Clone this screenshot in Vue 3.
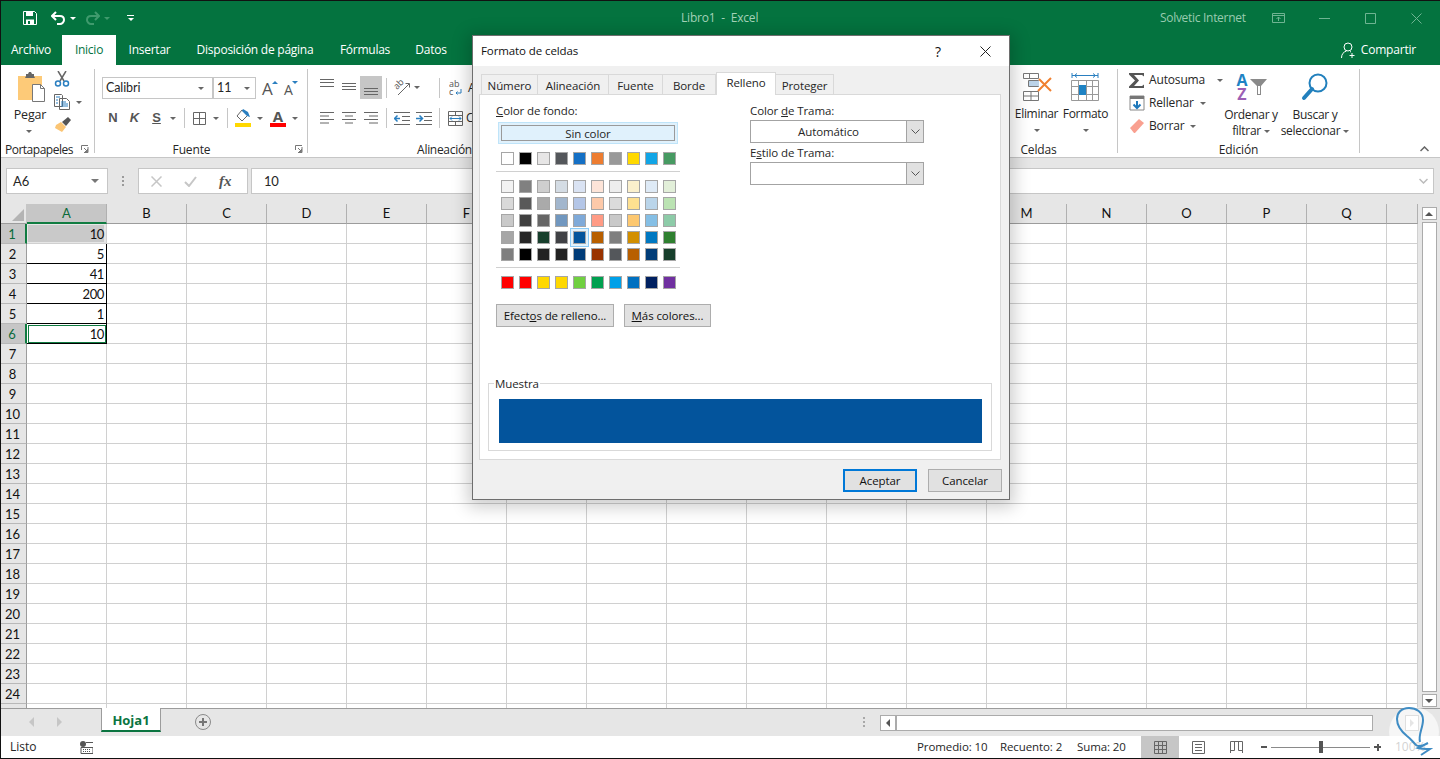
<script setup>
const tabs = [
  { t: 'Archivo', w: 60 },
  { t: 'Inicio', w: 54, on: true },
  { t: 'Insertar', w: 67 },
  { t: 'Disposición de página', w: 144 },
  { t: 'Fórmulas', w: 76 },
  { t: 'Datos', w: 56 }
]
const cols = ['A','B','C','D','E','F','G','H','I','J','K','L','M','N','O','P','Q','']
const rows = Array.from({ length: 25 }, (_, i) => i + 1)
const vals = { 1: '10', 2: '5', 3: '41', 4: '200', 5: '1', 6: '10' }
const dlgTabs = ['Número', 'Alineación', 'Fuente', 'Borde', 'Relleno', 'Proteger']
const theme = ['#ffffff','#000000','#e7e6e6','#54575b','#1570c5','#ed7d31','#999999','#ffd900','#11a5e6','#479a62']
const shades = [
  '#f2f2f2','#808080','#cfcfcf','#d4dce4','#dae3f3','#fde4d8','#ededed','#fbf0cc','#deeaf6','#e2efd9',
  '#d9d9d9','#595959','#aaaaaa','#a2b6cd','#b4c6e7','#fdc9a9','#dbdbdb','#fee090','#bad5ea','#bbe3b3',
  '#c9c9c9','#404040','#666666','#7197bf','#7faad9','#ff9b85','#c9c9c9','#fdc870','#85bfe5','#8dcba8',
  '#a6a6a6','#262626','#173f2c','#404145','#03549c','#b85f00','#7f7f7f','#d28f00','#0078c1','#2f8030',
  '#7f7f7f','#000000','#222222','#222222','#003c78','#993300','#54575b','#b85f00','#003c78','#173f2c'
]
const standard = ['#ff0000','#ff0000','#ffd800','#ffd800','#70d040','#00a050','#00a0e8','#0070c0','#002060','#7030a0']
</script>

<template>
  <div class="win">
    <header class="title">
      <div class="qat">
        <svg class="i-save" width="14" height="14" viewBox="0 0 14 14"><path d="M.5.5h11l2 2v11H.5z" fill="none" stroke="#fff"/><path d="M3 1h7v4H3zM3 8.500h8V13H3z" fill="#fff"/><path d="M5 10h2v3H5z" fill="#04733f"/></svg>
        <svg class="i-undo" width="15" height="14" viewBox="0 0 15 14"><path d="M1 5h8c3 0 4 2 4 4s-2 4-4 4H6M5 1 1 5l4 4" fill="none" stroke="#fff" stroke-width="2"/></svg>
        <i class="car white"></i>
        <svg class="i-redo" width="15" height="14" viewBox="0 0 15 14"><path d="M14 5H6C3 5 2 7 2 9s2 4 4 4h3M10 1l4 4-4 4" fill="none" stroke="#3f9a6d" stroke-width="2"/></svg>
        <i class="car dim"></i>
        <span class="cust"><b></b><i class="car white"></i></span>
      </div>
      <div class="doc">Libro1 &nbsp;-&nbsp; Excel</div>
      <div class="acct">Solvetic Internet</div>
      <div class="wbs">
        <span class="wb"><svg width="13" height="11" viewBox="0 0 13 11"><path d="M.5.500h12v9H.500zM.5 2.500h12M6.500 8V4M4.500 6l2-2 2 2" fill="none" stroke="#6fb492"/></svg></span>
        <span class="wb"><svg width="11" height="11" viewBox="0 0 11 11"><path d="M0 5.500h11" stroke="#6fb492"/></svg></span>
        <span class="wb"><svg width="11" height="11" viewBox="0 0 11 11"><path d="M.5.500h10v10H.500z" fill="none" stroke="#6fb492"/></svg></span>
        <span class="wb"><svg width="11" height="11" viewBox="0 0 11 11"><path d="m.5.500 10 10m0-10-10 10" fill="none" stroke="#6fb492"/></svg></span>
      </div>
    </header>

    <nav class="tabs">
      <span v-for="t in tabs" :key="t.t" class="tab" :class="{ on: t.on }" :style="{ width: t.w + 'px' }">{{ t.t }}</span>
      <span class="share">
        <svg width="16" height="17" viewBox="0 0 16 17"><circle cx="7" cy="5" r="4" fill="none" stroke="#fff"/><path d="M.5 16c0-4 2-6 5-7M9 9.500l1 .5M11 11v5M8.500 13.500h5" fill="none" stroke="#fff"/></svg>
        Compartir
      </span>
    </nav>

    <section class="ribbon">
      <div class="grp g-clip">
        <div class="clip-body">
          <div class="paste">
            <svg width="30" height="31" viewBox="0 0 30 31"><path d="M1 5h24v24H1z" fill="#fdca78"/><path d="M9 5V3h2l1-2h2l1 2h2v2l1 2H8z" fill="#666"/><path d="M15.500 13.500h8l4 4v13h-12z" fill="#fff" stroke="#777"/><path d="M23.500 13.500v4h4" fill="none" stroke="#777"/></svg>
            <span class="lbl">Pegar</span>
            <i class="car"></i>
          </div>
          <div class="clip-tools">
            <svg width="16" height="16" viewBox="0 0 16 16"><path d="M4 0l6 10M12 0 6 10" stroke="#666" stroke-width="1.500"/><circle cx="4" cy="12.500" r="2.500" fill="none" stroke="#2a7fc0" stroke-width="1.500"/><circle cx="12" cy="12.500" r="2.500" fill="none" stroke="#2a7fc0" stroke-width="1.500"/></svg>
            <span class="copy"><svg width="16" height="16" viewBox="0 0 16 16"><path d="M.5.500h7l1 1v11H.500zM5.500 4.500h7l3 3v8h-10z" fill="#fff" stroke="#666"/><path d="M2 3h4M2 6h2M2 9h2M7 8h5M7 10h7M7 12h7" stroke="#2a7fc0"/></svg><i class="car"></i></span>
            <svg width="17" height="16" viewBox="0 0 17 16"><path d="M7 5l5 5-4 5-7-4 1-3z" fill="#fbc574"/><path d="M8 5l6-5 3 3-5 6z" fill="#555"/></svg>
          </div>
        </div>
        <div class="gl">Portapapeles</div>
        <svg class="launch" width="8" height="8" viewBox="0 0 8 8"><path d="M.5 5V.500H7M7 2v5.500H3M3 3l3.500 3.500M6.500 4v2.500H4" fill="none" stroke="#777"/></svg>
      </div>

      <div class="grp g-font">
        <div class="f-r1">
          <div class="combo c-font"><span>Calibri</span><i class="car"></i></div>
          <div class="combo c-size"><span>11</span><i class="car"></i></div>
          <span class="growa">A<i class="up"></i></span>
          <span class="growa small">A<i class="dn"></i></span>
        </div>
        <div class="f-r2">
          <b class="fm">N</b><b class="fm it">K</b><b class="fm un">S</b><i class="car"></i>
          <u class="vs"></u>
          <svg width="13" height="13" viewBox="0 0 13 13"><path d="M.5.500h12v12H.500zM6.500.500v12M.5 6.500h12" fill="none" stroke="#666"/></svg>
          <i class="car"></i>
          <u class="vs"></u>
          <svg width="16" height="18" viewBox="0 0 16 18"><path d="M7 1 2 7l5 5 6-6z" fill="#fff" stroke="#666"/><path d="M8 0l5 3 2 5-3-1-5-5z" fill="#2a7fc0"/><path d="M0 14h16v4H0z" fill="#ffd800"/></svg>
          <i class="car"></i>
          <span class="fcolor">A</span>
          <i class="car"></i>
        </div>
        <div class="gl gl-f">Fuente</div>
        <svg class="launch" width="8" height="8" viewBox="0 0 8 8"><path d="M.5 5V.500H7M7 2v5.500H3M3 3l3.500 3.500M6.500 4v2.500H4" fill="none" stroke="#777"/></svg>
      </div>

      <div class="grp g-align">
        <div class="a-r1">
          <svg width="14" height="23" viewBox="0 0 14 23"><path d="M0 3.500h14M0 6.500h14M0 10.500h14" stroke="#666"/></svg>
          <svg width="14" height="23" viewBox="0 0 14 23"><path d="M0 7.500h14M0 10.500h14M0 13.500h14" stroke="#666"/></svg>
          <span class="hl"><svg width="14" height="23" viewBox="0 0 14 23"><path d="M0 12.500h14M0 15.500h14M0 18.500h14" stroke="#666"/></svg></span>
          <u class="vs"></u>
          <svg width="18" height="18" viewBox="0 0 18 18"><text x="0" y="0" transform="translate(4 11) rotate(-45)" font-size="9" fill="#555" font-family="Open Sans">ab</text><path d="M5 16 16 5M12.500 4.500H16.500V8.500" fill="none" stroke="#666"/></svg>
          <i class="car"></i>
          <span></span>
          <u class="vs"></u>
          <svg width="13" height="17" viewBox="0 0 13 17"><text x="0" y="8" font-size="9" fill="#555" font-family="Open Sans">ab</text><text x="0" y="16" font-size="9" fill="#555" font-family="Open Sans">c</text><path d="M12 10v4H7M8.500 12.500 7 14l1.500 1.500" fill="none" stroke="#2a7fc0"/></svg>
          <span class="rt">A</span>
        </div>
        <div class="a-r2">
          <svg width="14" height="12" viewBox="0 0 14 12"><path d="M0 .5h14M0 4h9M0 7.500h14M0 11h9" stroke="#666"/></svg>
          <svg width="14" height="12" viewBox="0 0 14 12"><path d="M0 .5h14M3 4h8M0 7.500h14M3 11h8" stroke="#666"/></svg>
          <svg width="14" height="12" viewBox="0 0 14 12"><path d="M0 .5h14M5 4h9M0 7.500h14M5 11h9" stroke="#666"/></svg>
          <u class="vs"></u>
          <svg width="16" height="13" viewBox="0 0 16 13"><path d="M0 .5h16M8 4.500h8M8 8.500h8M0 12.500h16" stroke="#666"/><path d="M6 6.500H1M3.500 3.500l-3 3 3 3" fill="none" stroke="#2a7fc0" stroke-width="1.500"/></svg>
          <svg width="16" height="13" viewBox="0 0 16 13"><path d="M0 .5h16M8 4.500h8M8 8.500h8M0 12.500h16" stroke="#666"/><path d="M0 6.500h6M3.500 3.500l3 3-3 3" fill="none" stroke="#2a7fc0" stroke-width="1.500"/></svg>
          <u class="vs"></u>
          <svg width="15" height="15" viewBox="0 0 15 15"><path d="M.5.500h14v14H.500zM.5 4.500h14M.5 10.500h14M7.500.500v4M7.500 10.500v4" fill="none" stroke="#666"/><path d="M2 7.500h11M4 5.500l-2 2 2 2M11 5.500l2 2-2 2" fill="none" stroke="#2a7fc0"/></svg>
          <span class="rt">C</span>
        </div>
        <div class="gl gl-a">Alineación</div>
      </div>

      <div class="gap"></div>

      <div class="grp g-cells">
        <div class="cells-body">
          <div class="big">
            <svg width="32" height="30" viewBox="0 0 32 30"><path d="M2.500 1.500h15v5h-15zM8.500 1.500v5M7.500 8.500h10v6h-10z" fill="#fff" stroke="#777"/><path d="M8 9h10v5H8z" fill="#bcd3e8"/><path d="M2.500 19.500h15v9h-15zM10 19.500v9M2.500 24h15" fill="none" stroke="#777"/><path d="m18 7 12 12M30 6 17 19" stroke="#f08030" stroke-width="2"/></svg>
            <span class="lbl">Eliminar</span><i class="car"></i>
          </div>
          <div class="big">
            <svg width="30" height="30" viewBox="0 0 30 30"><path d="M1 1v5M1 3.500h26M27 1v5M3.500 3.500 6 1.500M3.500 3.500 6 5.500M24.500 3.500 22 1.500M24.500 3.500 22 5.500" fill="none" stroke="#2a7fc0"/><path d="M.5 8.500h27v20H.500zM7.500 8.500v20M15.500 8.500v20M21.500 8.500v20M.5 14.500h27M.5 22.500h27" fill="#fff" stroke="#999"/><path d="M8 13h7v10H8z" fill="#1e83c4"/></svg>
            <span class="lbl">Formato</span><i class="car"></i>
          </div>
        </div>
        <div class="gl">Celdas</div>
      </div>

      <div class="grp g-edit">
        <div class="edit-body">
          <div class="ed-list">
            <div class="ed-row">
              <svg width="16" height="15" viewBox="0 0 16 15"><path d="M0 0h15v3.500L13 2H5l5 5.500L5 13h8l2-1.500V15H0v-1.500L6 7.500 0 1.500z" fill="#555"/></svg>
              <span>Autosuma</span><i class="car far"></i>
            </div>
            <div class="ed-row">
              <svg width="16" height="16" viewBox="0 0 16 16"><path d="M1 1h14v14H1z" fill="#fff" stroke="#888"/><path d="M1 1h14v3H1z" fill="#777"/><path d="M8 6v7M4.500 9.500 8 13l3.500-3.500" fill="none" stroke="#1e78bb" stroke-width="2"/></svg>
              <span>Rellenar</span><i class="car"></i>
            </div>
            <div class="ed-row">
              <svg width="16" height="16" viewBox="0 0 16 16"><path d="M1 10 10 1l5 4-9 10H5z" fill="#f9a090"/></svg>
              <span>Borrar</span><i class="car"></i>
            </div>
          </div>
          <div class="big b-sort">
            <div class="sorticon"><span class="az"><b class="la">A</b><b class="lz">Z</b></span>
              <svg width="17" height="16" viewBox="0 0 17 16"><path d="M0 0h17l-6 7v9H7V7z" fill="#8a8a8a"/><path d="M8 7h2v8H8z" fill="#fff"/></svg></div>
            <span class="lbl">Ordenar y</span><span class="lbl l2">filtrar<i class="car"></i></span>
          </div>
          <div class="big b-find">
            <svg width="28" height="30" viewBox="0 0 28 30"><circle cx="17" cy="11" r="8.500" fill="none" stroke="#2280bd" stroke-width="2"/><path d="M11 17 3 26" stroke="#2280bd" stroke-width="4" stroke-linecap="round"/></svg>
            <span class="lbl">Buscar y</span><span class="lbl l2">seleccionar<i class="car"></i></span>
          </div>
        </div>
        <div class="gl">Edición</div>
      </div>
      <div class="rest">
        <svg width="9" height="6" viewBox="0 0 9 6"><path d="M.5 5 4.500 1l4 4" fill="none" stroke="#666" stroke-width="1.500"/></svg>
      </div>
    </section>

    <section class="fbar">
      <div class="namebox"><span>A6</span><i class="car wide"></i></div>
      <div class="dots"></div>
      <div class="fxbox">
        <svg width="11" height="11" viewBox="0 0 11 11"><path d="m.5.500 10 10m0-10-10 10" stroke="#c6c6c6" stroke-width="1.500"/></svg>
        <svg width="13" height="11" viewBox="0 0 13 11"><path d="m1 6 4 4 7-9" fill="none" stroke="#c6c6c6" stroke-width="2"/></svg>
        <em>fx</em>
      </div>
      <div class="finput"><span>10</span>
        <svg width="9" height="6" viewBox="0 0 9 6"><path d="m.5 1 4 4 4-4" fill="none" stroke="#bbb" stroke-width="1.500"/></svg>
      </div>
    </section>

    <section class="sheetwrap">
      <div class="sheet">
        <div class="corner"><i></i></div>
        <div v-for="c in cols" :key="'h' + c" class="ch" :class="{ sel: c === 'A' }">{{ c }}</div>
        <template v-for="r in rows" :key="r">
          <div class="rh" :class="{ sel: r === 1 || r === 6 }">{{ r < 25 ? r : '' }}</div>
          <div v-for="(c, i) in cols" :key="c + r" class="cell"
               :class="{ a1: i === 0 && r === 1, ab: i === 0 && r > 1 && r < 7, a6: i === 0 && r === 6 }">{{ i === 0 ? vals[r] : '' }}</div>
        </template>
      </div>
      <div class="vscroll">
        <div class="sb-btn"><i class="tri up"></i></div>
        <div class="sb-thumb"></div>
        <div class="sb-btn"><i class="tri dn"></i></div>
      </div>
    </section>

    <section class="sheetbar">
      <div class="nav"><i class="tri lf"></i><i class="tri rg"></i></div>
      <div class="sheettab">Hoja1</div>
      <svg class="plus" width="18" height="18" viewBox="0 0 18 18"><circle cx="9" cy="9" r="7.500" fill="none" stroke="#8a8a8a"/><path d="M9 5v8M5 9h8" stroke="#777" stroke-width="2"/></svg>
      <div class="dots2"></div>
      <div class="hscroll">
        <div class="hb"><i class="tri lfd"></i></div>
        <div class="hthumb"></div>
        <div class="hb hb2"><i class="tri rgd"></i></div>
      </div>
    </section>

    <footer class="status">
      <span class="ready">Listo</span>
      <svg class="macro" width="13" height="13" viewBox="0 0 13 13"><circle cx="3" cy="3" r="3" fill="#555"/><path d="M6 1.500h7M1 6.500h12v6H1z" fill="none" stroke="#555"/><path d="M3 8.500h8M3 10.500h8" stroke="#555" stroke-dasharray="1 1"/></svg>
      <span class="st s1">Promedio: 10</span>
      <span class="st s2">Recuento: 2</span>
      <span class="st s3">Suma: 20</span>
      <span class="vb on"><svg width="13" height="13" viewBox="0 0 13 13"><path d="M.5.500h12v12H.500zM4.500.500v12M8.500.500v12M.5 4.500h12M.5 8.500h12" fill="none" stroke="#666"/></svg></span>
      <span class="vb"><svg width="13" height="13" viewBox="0 0 13 13"><path d="M.5.500h12v12H.500zM3 3.500h7M3 6.500h7M3 9.500h7" fill="none" stroke="#666"/></svg></span>
      <span class="vb"><svg width="13" height="13" viewBox="0 0 13 13"><path d="M.5 12V.500h12V12M.5 9.500h4V.500M12.500 9.500h-4V.500" fill="none" stroke="#666"/></svg></span>
      <span class="zm-m"></span>
      <span class="slider"><b></b></span>
      <span class="zm-p"></span>
      <span class="zm-t">100%</span>
    </footer>

    <div class="dlg">
      <div class="dlg-title">
        <span>Formato de celdas</span>
        <em class="help">?</em>
        <svg class="close" width="11" height="11" viewBox="0 0 11 11"><path d="m.5.500 10 10m0-10-10 10" fill="none" stroke="#222"/></svg>
      </div>
      <div class="dlg-tabs">
        <span v-for="t in dlgTabs" :key="t" class="dt" :class="[{ on: t === 'Relleno' }, 'dt-' + t.length]">{{ t }}</span>
      </div>
      <div class="panel">
        <div class="two">
          <div class="left">
            <div class="lab"><u>C</u>olor de fondo:</div>
            <div class="nocolor"><span>Sin color</span></div>
            <div class="sw"><i v-for="(c, i) in theme" :key="i" :style="{ background: c }"></i></div>
            <hr class="sep" />
            <div class="sw tall"><i v-for="(c, i) in shades" :key="i" :class="{ picked: i === 34 }" :style="{ background: c }"></i></div>
            <hr class="sep" />
            <div class="sw"><i v-for="(c, i) in standard" :key="i" :style="{ background: c }"></i></div>
            <div class="btns">
              <button class="btn b-ef">Efect<u>o</u>s de relleno...</button>
              <button class="btn b-mas"><u>M</u>ás colores...</button>
            </div>
          </div>
          <div class="right">
            <div class="lab">Color <u>d</u>e Trama:</div>
            <div class="dcombo"><span>Automático</span><b><svg width="9" height="5" viewBox="0 0 9 5"><path d="m.5.500 4 4 4-4" fill="none" stroke="#555"/></svg></b></div>
            <div class="lab l2">E<u>s</u>tilo de Trama:</div>
            <div class="dcombo"><span></span><b><svg width="9" height="5" viewBox="0 0 9 5"><path d="m.5.500 4 4 4-4" fill="none" stroke="#555"/></svg></b></div>
          </div>
        </div>
        <div class="sample">
          <span class="leg">Muestra</span>
          <div class="fill"></div>
        </div>
      </div>
      <div class="dlg-foot">
        <button class="btn ok">Aceptar</button>
        <button class="btn cancel">Cancelar</button>
      </div>
    </div>

    <svg class="logo" width="60" height="64" viewBox="0 0 60 64">
      <circle cx="34" cy="37" r="25" fill="#fff" opacity=".62"/>
      <path d="M40 47C38 40 43 33 43 25 43 17 36 13 29 13 21 13 17 18 17 24c0 8 5 13 10 17 4 3 6 6 9 9 4 3 8 0 12-2-4 2-8 4-10 5 4 1 9 1 12 1-3 2-6 4-9 6" fill="none" stroke="#3f8cc4" stroke-width="2"/>
    </svg>
  </div>
</template>

<style>
html, body { margin: 0; background: #fff; overflow: hidden; }
</style>

<style scoped>
.win { position: relative; width: 1440px; height: 759px; box-sizing: border-box; border: solid #111; border-width: 1px 0 1px 1px; display: flex; flex-direction: column; overflow: hidden; font: 12px/16px "Open Sans", sans-serif; color: #262626; background: #fff; }
svg { display: block; flex: none; }
u.vs { display: block; width: 1px; height: 20px; background: #c6c6c6; justify-self: center; text-decoration: none; }
.car { display: block; width: 0; height: 0; border: 3.500px solid transparent; border-bottom: 0; border-top: 3.500px solid #666; flex: none; justify-self: center; }
.car.white { border-top-color: #fff; }
.car.dim { border-top-color: #3f9a6d; }

.title { height: 34px; flex: none; background: #04733f; display: flex; align-items: center; }
.qat { width: 680px; flex: none; display: flex; align-items: center; box-sizing: border-box; padding-left: 22px; }
.i-undo { margin-left: 14px; }
.qat .car { margin-left: 4px; }
.i-redo { margin-left: 9px; }
.cust { margin-left: 17px; display: flex; flex-direction: column; align-items: center; gap: 2px; }
.cust b { width: 7px; height: 1px; background: #fff; }
.cust .car { margin: 0; }
.doc { width: 479px; flex: none; color: #a3d2b8; letter-spacing: -.2px; }
.acct { color: #98cbaf; letter-spacing: -.3px; white-space: nowrap; }
.wbs { margin-left: auto; display: flex; }
.wb { width: 46px; display: flex; align-items: center; justify-content: center; }
.wbs .wb:last-child { margin-right: 1px; }

.tabs { height: 30px; flex: none; background: #04733f; display: flex; align-items: center; color: #fff; }
.tab { height: 30px; line-height: 30px; text-align: center; flex: none; letter-spacing: -.25px; }
.tab:first-child { margin-left: 0; }
.tab.on { background: #fff; color: #04733f; margin-left: 1px; }
.share { margin-left: auto; margin-right: 24px; display: flex; align-items: center; gap: 4px; letter-spacing: -.2px; }

.ribbon { height: 93px; flex: none; box-sizing: border-box; border-bottom: 1px solid #c6c6c6; display: flex; background: #fff; }
.grp { position: relative; height: 84px; margin-top: 4px; box-sizing: border-box; border-right: 1px solid #c6c6c6; display: flex; flex-direction: column; flex: none; }
.gl { margin-top: auto; margin-bottom: -4px; height: 14px; line-height: 14px; text-align: center; white-space: nowrap; letter-spacing: -.15px; }
.launch { position: absolute; bottom: 0; right: 4px; }
.lbl { display: block; white-space: nowrap; text-align: center; letter-spacing: -.2px; }

.g-clip { width: 94px; }
.g-clip .gl { text-align: left; padding-left: 4px; letter-spacing: -.5px; }
.g-clip .launch { right: 5px; }
.clip-body { display: flex; }
.paste { width: 53px; flex: none; display: flex; flex-direction: column; align-items: center; padding-top: 2px; padding-left: 4px; box-sizing: border-box; }
.paste svg { margin-left: 4px; }
.paste .lbl { margin-top: 5px; margin-left: 1px; font-size: 12.500px; }
.paste .car { margin-top: 7px; margin-left: -2px; }
.clip-tools { display: flex; flex-direction: column; gap: 7px; padding-top: 2px; }
.copy { display: flex; align-items: center; gap: 6px; }

.g-font { width: 213px; padding-left: 7px; }
.gl-f { margin-right: 26px; }
.gl-a { margin-right: 4px; letter-spacing: -.3px; }
.f-r1 { margin-top: 8px; height: 22px; display: flex; align-items: stretch; }
.combo { box-sizing: border-box; height: 22px; border: 1px solid #c6c6c6; display: flex; align-items: center; justify-content: space-between; padding: 0 8px 0 3px; font-family: Lato, sans-serif; font-size: 12.500px; letter-spacing: -.1px; }
.c-font { width: 111px; }
.c-size { width: 43px; margin-right: 6px; padding-right: 5px; }
.growa { position: relative; width: 21px; text-align: left; font-size: 17px; line-height: 23px; color: #555; }
.growa.small { font-size: 14px; line-height: 25px; padding-left: 1px; box-sizing: border-box; }
.growa .up, .growa .dn { position: absolute; top: 4px; left: 10px; width: 0; height: 0; border: 3px solid transparent; }
.growa .up { border-top: 0; border-bottom: 3px solid #2a7fc0; }
.growa .dn { border-bottom: 0; border-top: 3px solid #2a7fc0; left: 9px; }
.f-r2 { margin-top: 9px; height: 20px; display: grid; align-items: center; justify-items: center; grid-template-columns: 22px 21px 23px 10px 13px 17px 16px 6px 26px 8px 28px 6px; }
.fm { font-size: 13px; color: #555; font-family: "Liberation Sans", sans-serif; }
.fm.it { font-style: italic; }
.fm.un { text-decoration: underline; }
.fcolor { font-size: 15px; font-weight: 700; color: #555; width: 16px; height: 18px; line-height: 14px; text-align: center; border-bottom: 4px solid #f00; box-sizing: border-box; }

.g-align { width: 270px; padding-left: 8px; }
.a-r1 { margin-top: 7px; height: 23px; display: grid; align-items: center; justify-items: center; justify-content: start; grid-template-columns: 22px 22px 22px 8px 24px 6px 16px 6px 26px 6px; }
.a-r2 { margin-top: 9px; height: 20px; display: grid; align-items: center; justify-items: center; justify-content: start; grid-template-columns: 22px 22px 22px 8px 24px 20px 10px 22px 6px; }
.hl { width: 22px; height: 23px; background: #c6c6c6; display: flex; justify-content: center; }
.rt { white-space: nowrap; justify-self: start; }

.gap { width: 382px; flex: none; }

.g-cells { width: 158px; }
.cells-body { display: flex; justify-content: flex-end; padding-right: 7px; }
.big { width: 49px; flex: none; display: flex; flex-direction: column; align-items: center; padding-top: 3px; }
.big .lbl { margin-top: 4px; letter-spacing: -.3px; }
.big .car { margin-top: 7px; }

.g-edit { width: 242px; }
.edit-body { display: flex; }
.ed-list { width: 106px; flex: none; padding: 3px 0 0 11px; box-sizing: border-box; display: flex; flex-direction: column; gap: 7px; }
.ed-row { height: 16px; display: flex; align-items: center; gap: 4px; white-space: nowrap; letter-spacing: -.15px; }
.ed-row .car { margin-left: 2px; }
.ed-row .far { margin-left: 8px; }
.b-sort { width: 54px; }
.b-find { width: 68px; margin-left: 3px; }
.b-sort .lbl, .b-find .lbl { margin-top: 5px; }
.big .lbl.l2 { margin-top: 0; display: flex; align-items: center; gap: 3px; }
.big .l2 .car { margin: 0; }
.sorticon { height: 30px; display: flex; align-items: center; gap: 1px; }
.az { display: flex; flex-direction: column; width: 13px; line-height: 14px; font-size: 16px; text-align: center; margin-top: -1px; }
.la { color: #1e83c4; }
.lz { color: #9c5fb5; }
.rest { flex: 1; display: flex; align-items: flex-end; justify-content: flex-end; padding: 0 11px 5px 0; }

.fbar { height: 46px; flex: none; background: #e6e6e6; display: flex; align-items: center; padding-left: 5px; box-sizing: border-box; font-size: 13px; }
.namebox { width: 102px; height: 26px; box-sizing: border-box; background: #fff; border: 1px solid #c6c6c6; display: flex; align-items: center; justify-content: space-between; padding: 0 8px 0 6px; font-family: Lato, sans-serif; }
.car.wide { border-width: 4px 4px 0; border-top-color: #777; }
.dots { width: 2px; height: 10px; margin: 0 14px; border-left: 2px dotted #9a9a9a; box-sizing: border-box; }
.fxbox { width: 110px; height: 26px; box-sizing: border-box; background: #fff; border: 1px solid #c6c6c6; display: flex; align-items: center; padding-left: 12px; gap: 22px; color: #555; }
.fxbox em { font: italic 700 15px "Liberation Serif", serif; }
.finput { margin-left: 3px; width: 1183px; height: 26px; box-sizing: border-box; background: #fff; border: 1px solid #c6c6c6; display: flex; align-items: center; justify-content: space-between; padding: 0 5px 0 12px; font-family: Lato, sans-serif; letter-spacing: -.2px; }

.sheetwrap { flex: none; height: 504px; display: flex; background: #e6e6e6; overflow: hidden; }
.sheet { width: 1417px; flex: none; display: grid; grid-template-columns: 26px repeat(17, 80px) 31px; grid-auto-rows: 20px; font: 13px/21px Lato, sans-serif; letter-spacing: -.4px; color: #111; }
.corner { background: #e6e6e6; border-bottom: 1px solid #9c9c9c; border-right: 1px solid #c6c6c6; box-sizing: border-box; position: relative; }
.corner i { position: absolute; right: 2px; bottom: 2px; border: solid transparent; border-width: 0 0 12px 12px; border-bottom-color: #b4b4b4; }
.ch { background: #e6e6e6; box-sizing: border-box; border-bottom: 1px solid #9c9c9c; border-right: 1px solid #b0b0b0; text-align: center; line-height: 19px; letter-spacing: 0; }
.ch.sel { background: #c6c6c6; border-bottom: 2px solid #107c41; color: #0b6b3a; }
.rh { background: #e6e6e6; box-sizing: border-box; border-bottom: 1px solid #b8b8b8; border-right: 1px solid #9c9c9c; text-align: center; padding-right: 2px; letter-spacing: 0; }
.rh.sel { background: #c6c6c6; border-right: 2px solid #107c41; color: #0b6b3a; }
.cell { background: #fff; box-sizing: border-box; border-bottom: 1px solid #d0d0d0; border-right: 1px solid #d0d0d0; text-align: right; padding-right: 2px; }
.cell.a1 { background: #c9c9c9; background-clip: content-box; padding: 1px 2px 1px 1px; line-height: 19px; }
.cell.ab { border-color: #000; }
.cell.a6 { outline: 1px solid #107c41; outline-offset: -2px; }

.vscroll { flex: 1; display: flex; flex-direction: column; align-items: center; padding: 3px 3px 1px 3px; gap: 2px; }
.sb-btn { width: 15px; height: 13px; flex: none; box-sizing: border-box; background: #fff; border: 1px solid #ababab; display: flex; align-items: center; justify-content: center; }
.sb-thumb { flex: 1; width: 15px; box-sizing: border-box; background: #fff; border: 1px solid #ababab; }
.tri { display: block; width: 0; height: 0; border: 4px solid transparent; }
.tri.up { border-top: 0; border-bottom: 4px solid #555; }
.tri.dn { border-bottom: 0; border-top: 4px solid #555; }
.tri.lf { border-left: 0; border-right: 4px solid #c6c6c6; border-width: 5px 5px 5px 0; }
.tri.rg { border-right: 0; border-left: 4px solid #c6c6c6; border-width: 5px 0 5px 5px; }
.tri.lfd { border-left: 0; border-right: 4px solid #555; }
.tri.rgd { border-right: 0; border-left: 4px solid #bbb; }

.sheetbar { height: 28px; flex: none; box-sizing: border-box; border-top: 1px solid #9c9c9c; background: #e6e6e6; display: flex; align-items: flex-start; }
.nav { width: 100px; height: 26px; flex: none; display: flex; align-items: center; gap: 23px; padding-left: 28px; box-sizing: border-box; }
.sheettab { width: 60px; height: 24px; flex: none; box-sizing: border-box; background: #fff; border: solid #9c9c9c; border-width: 0 1px; border-bottom: 2px solid #0a7440; margin-top: -1px; padding-top: 1px; color: #0a7440; font-weight: 700; font-size: 13px; line-height: 22px; text-align: center; }
.plus { margin: 4px 0 0 33px; }
.dots2 { margin: 8px 0 0 651px; width: 2px; height: 10px; border-left: 2px dotted #a8a8a8; box-sizing: border-box; }
.hscroll { margin: 6px 0 0 15px; width: 540px; height: 16px; display: flex; }
.hb { width: 16px; flex: none; box-sizing: border-box; background: #fff; border: 1px solid #ababab; display: flex; align-items: center; justify-content: center; }
.hthumb { width: 477px; flex: none; box-sizing: border-box; background: #fff; border: 1px solid #ababab; }
.hb2 { margin-left: 32px; width: 14px; }

.status { flex: 1; background: #fff; display: flex; align-items: center; position: relative; }
.ready { margin-left: 9px; width: 70px; flex: none; }
.st { white-space: nowrap; flex: none; font-size: 11.500px; letter-spacing: -.1px; }
.s1 { margin-left: 824px; width: 83px; }
.s2 { width: 77px; }
.s3 { width: 64px; }
.vb { width: 38px; height: 22px; flex: none; display: flex; align-items: center; justify-content: center; }
.vb.on { background: #c6c6c6; }
.zm-m { margin-left: 6px; width: 6px; height: 2px; flex: none; background: #555; }
.slider { margin-left: 4px; position: relative; width: 99px; height: 1px; flex: none; background: #8a8a8a; }
.slider b { position: absolute; left: 48px; top: -6px; width: 4px; height: 12px; background: #555; }
.zm-p { position: relative; margin-left: 4px; width: 7px; height: 2px; flex: none; background: #555; }
.zm-p::after { content: ""; position: absolute; left: 2.500px; top: -2.500px; width: 2px; height: 7px; background: #555; }
.zm-t { margin-left: 14px; color: #888; }

.dlg { position: absolute; left: 471px; top: 34px; width: 538px; height: 465px; box-sizing: border-box; border: 1px solid #6e6e6e; background: #f0f0f0; box-shadow: 0 3px 16px 4px rgba(0,0,0,.2); display: flex; flex-direction: column; font-size: 11.500px; letter-spacing: -.1px; }
.dlg-title { height: 30px; flex: none; background: #fff; display: flex; align-items: center; padding-left: 8px; color: #111; }
.dlg-title span { flex: 1; }
.help { font: 14px "Open Sans", sans-serif; margin-right: 39px; }
.close { margin-right: 18px; }
.dlg-tabs { display: flex; margin: 6px 0 0 8px; height: 22px; align-items: flex-end; flex: none; }
.dt { box-sizing: border-box; height: 20px; line-height: 21px; text-align: center; background: #f0f0f0; border: 1px solid #d9d9d9; border-bottom: 0; border-left: 0; }
.dt:first-child { border-left: 1px solid #d9d9d9; width: 57px; }
.dt-10 { width: 71px; }
.dt-6 { width: 54px; }
.dt-5 { width: 53px; }
.dt-7 { width: 60px; }
.dt-8 { width: 58px; }
.dt.on { line-height: 20px; background: #fff; border-left: 1px solid #d9d9d9; position: relative; z-index: 1; margin-bottom: -1px; height: 23px; }
.panel { margin: 0 0 0 6px; width: 522px; height: 366px; flex: none; box-sizing: border-box; background: #fff; border: 1px solid #d9d9d9; display: flex; flex-direction: column; }
.two { display: flex; padding: 8px 0 0 16px; }
.left { width: 254px; flex: none; }
.lab { line-height: 16px; height: 16px; white-space: nowrap; }
.nocolor { box-sizing: border-box; margin: 3px 0 0 2px; width: 180px; height: 22px; border: 1px solid #bfe4f9; background: #e0f1fc; padding: 2px; }
.nocolor span { display: block; box-sizing: border-box; height: 16px; border: 1px solid #9a9a9a; text-align: center; line-height: 15px; }
.sw { display: grid; grid-template-columns: repeat(10, 13px); column-gap: 5px; row-gap: 4px; margin: 8px 0 0 5px; }
.sw.tall { margin-top: 8px; }
.sw i { display: block; height: 13px; box-sizing: border-box; border: 1px solid #a6a6a6; }
.sw i.picked { box-shadow: 0 0 0 2px #e2f2fc, 0 0 0 3px #8ccbf6; }
.sep { border: 0; border-top: 1px solid #d0d0d0; margin: 6px 0 0; width: 184px; height: 0; }
.btns { display: flex; gap: 10px; margin-top: 15px; }
.btn { box-sizing: border-box; height: 23px; background: #e1e1e1; border: 1px solid #adadad; padding: 0; font: 11.500px "Open Sans", sans-serif; color: #111; letter-spacing: -.1px; }
.b-ef { width: 118px; }
.b-mas { width: 87px; }
.right { width: 174px; }
.dcombo { height: 23px; margin-top: 1px; box-sizing: border-box; border: 1px solid #a3a3a3; display: flex; }
.dcombo span { flex: 1; text-align: center; line-height: 21px; }
.dcombo b { width: 17px; background: #e1e1e1; border-left: 1px solid #a3a3a3; display: flex; align-items: center; justify-content: center; box-sizing: border-box; }
.lab.l2 { margin-top: 2px; }
.sample { position: relative; margin: auto 8px 8px 8px; height: 68px; box-sizing: border-box; border: 1px solid #d9d9d9; padding: 15px 9px 6px 10px; }
.leg { position: absolute; left: 5px; top: -8px; background: #fff; padding: 0 1px; line-height: 15px; }
.fill { height: 44px; background: #03549c; }
.dlg-foot { flex: 1; display: flex; justify-content: flex-end; align-items: flex-start; padding: 9px 7px 0 0; gap: 11px; }
.ok { width: 74px; border: 2px solid #0078d7; }
.cancel { width: 74px; }

.logo { position: absolute; right: 0; bottom: -1px; }
</style>
